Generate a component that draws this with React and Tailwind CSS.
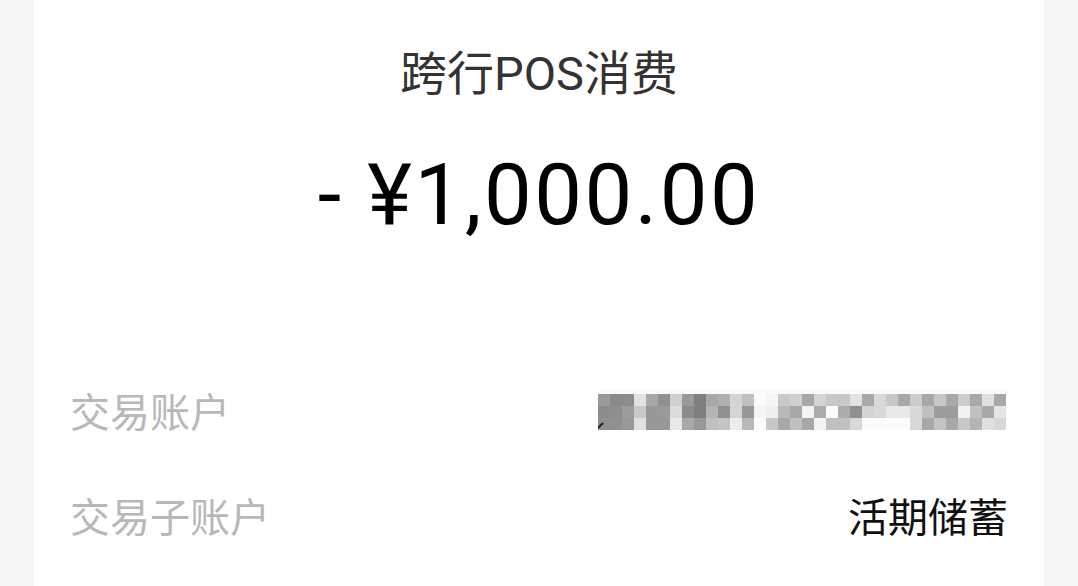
import React from "react";

const CJK = { fontFamily: '"Noto Sans CJK SC", "Noto Sans", sans-serif' };
const MIXED = { fontFamily: 'Roboto, "Noto Sans CJK SC", sans-serif' };

// mosaic tones for the blurred account number
const mosaic = [
  ["9a", "8a", "8c", "e2", "a8", "90", "d0", "98", "7e", "a8", "b0", "d4", "c0", "fa", "f6", "c8", "d0", "a8", "d4", "c8", "c8", "e2", "a8", "d8", "c8", "a8", "cc", "a8", "c8", "a8", "cc", "a8", "e0", "a8"],
  ["8c", "8e", "9c", "c8", "98", "9a", "dc", "8c", "7e", "b4", "90", "d4", "98", "f6", "f0", "b8", "a8", "f4", "ac", "fc", "ac", "90", "d4", "d8", "e8", "e8", "d8", "c0", "9c", "9c", "f2", "c0", "a8", "e4"],
  ["90", "90", "98", "e0", "98", "98", "e8", "a8", "98", "c0", "c4", "ec", "b8", "fc", "c8", "a8", "c0", "a8", "f4", "c0", "c0", "d8", "fc", "fc", "fc", "fc", "d8", "a8", "c4", "a8", "c8", "b4", "e0", "d8"],
];

function Mosaic() {
  return (
    <svg width="410" height="40" viewBox="0 0 410 40">
      <rect x="0" y="0" width="410" height="4" fill="#fafafa" />
      {mosaic.map((row, r) =>
        row.map((c, i) => (
          <rect key={r + "-" + i} x={i * 12} y={4 + r * 12} width="12" height="12" fill={"#" + c + c + c} />
        ))
      )}
      <path d="M0 38 L5 33" stroke="#222" strokeWidth="2" />
    </svg>
  );
}

export default function App() {
  return (
    <div className="w-[1078px] h-[586px] bg-[#f5f5f5] overflow-hidden">
      <div className="mx-[34px] h-full bg-white flex flex-col">
        <div className="pt-[43px] text-center text-[47px] leading-[62px] text-[#333]" style={MIXED}>
          跨行POS消费
        </div>
        <div className="mt-[38px] text-center text-[85px] leading-[104px] tracking-[2.5px] text-black" style={MIXED}>
          - ¥1,000.00
        </div>
        <div className="mt-[135px] px-[36px] flex flex-col gap-[49px]">
          <div className="flex items-center justify-between h-[56px]">
            <span className="text-[40px] text-[#b8b8b8]" style={CJK}>交易账户</span>
            <Mosaic />
          </div>
          <div className="flex items-center justify-between h-[56px]">
            <span className="text-[40px] text-[#b8b8b8]" style={CJK}>交易子账户</span>
            <span className="text-[40px] text-[#111]" style={CJK}>活期储蓄</span>
          </div>
        </div>
      </div>
    </div>
  );
}
